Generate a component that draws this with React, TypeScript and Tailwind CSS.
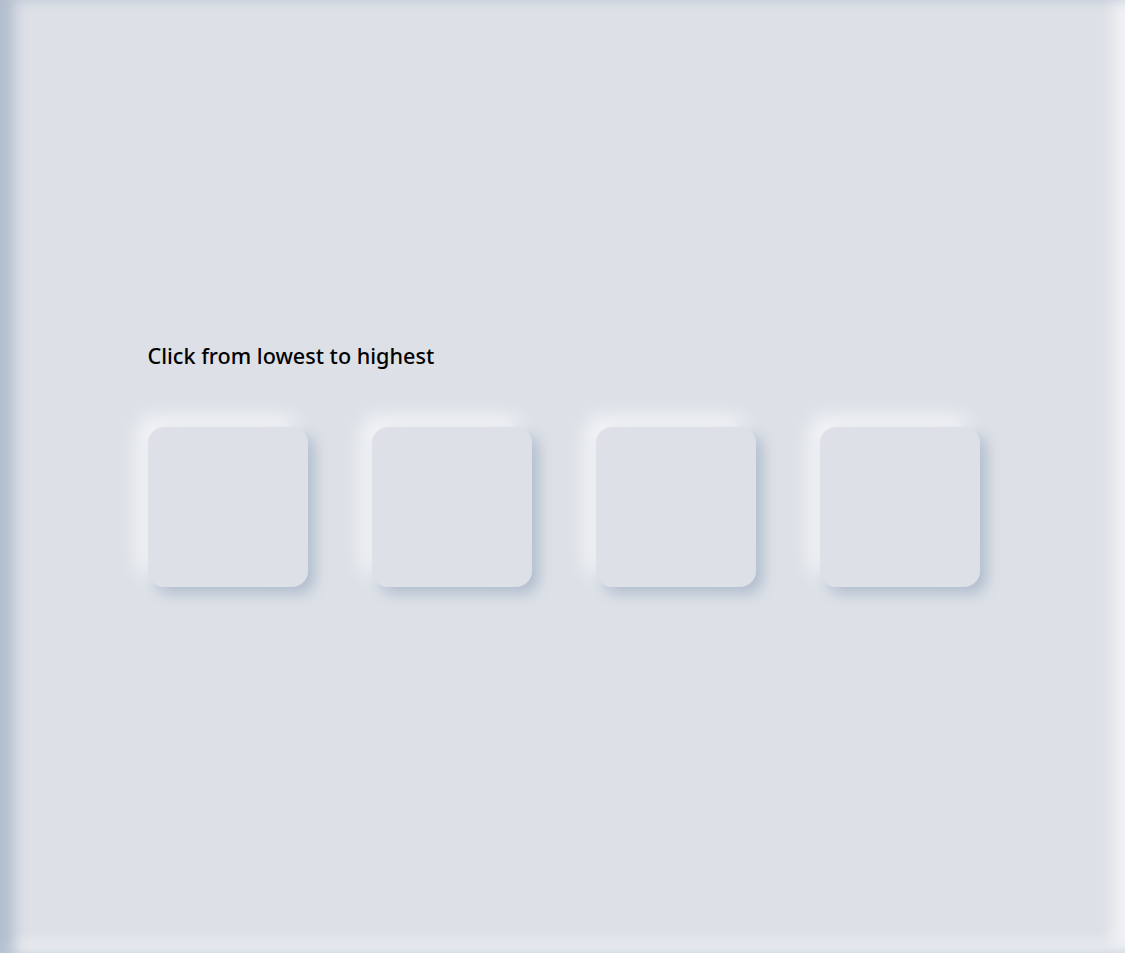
export default function App() {
  const boxes = [0, 1, 2, 3]

  return (
    <div
      className="h-[953px] w-full bg-[#dde1e7] flex flex-col items-center justify-center pb-6 shadow-[inset_16px_0_14px_-2px_rgba(163,177,198,0.75),inset_-12px_-10px_14px_rgba(255,255,255,0.55)]"
      style={{ fontFamily: '"Noto Sans", "Open Sans", sans-serif' }}
    >
      <div className="w-[832px] ml-[2px]">
        <p className="text-[21.6px] leading-7 font-medium text-black mb-[57px]">
          Click from lowest to highest
        </p>
        <div className="flex gap-16">
          {boxes.map((b) => (
            <button
              key={b}
              className="w-40 h-40 rounded-2xl bg-[#dde1e7] shadow-[7px_7px_14px_rgba(163,177,198,0.75),-10px_-10px_20px_rgba(255,255,255,0.7)]"
            />
          ))}
        </div>
      </div>
    </div>
  )
}
